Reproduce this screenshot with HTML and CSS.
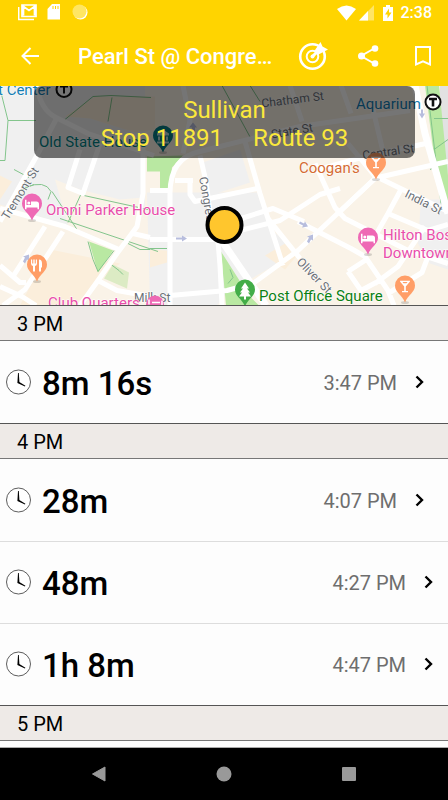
FILE: index.html
```html
<!DOCTYPE html>
<html lang="en">
<head>
  <meta charset="UTF-8" />
  <meta name="viewport" content="width=device-width, initial-scale=1.0"/>
  <title>Pearl St @ Congress St</title>
  <link rel="stylesheet" href="styles.css">
</head>
<body>
  <svg class="defs" width="0" height="0" aria-hidden="true">
    <symbol id="clock" viewBox="0 0 26 26">
      <circle cx="13.500" cy="13" r="12" fill="#fff" stroke="#333" stroke-width=".8"/>
      <path d="M13 4h.8l.6 9 6 3.800-.5.8-7.500-3.600z" fill="#000"/>
    </symbol>
    <symbol id="chevron" viewBox="0 0 10 14">
      <path d="M1.500 1.500L7 7 1.500 12.500" fill="none" stroke="#000" stroke-width="2.400"/>
    </symbol>
    <symbol id="pin" viewBox="0 0 20 28" overflow="visible">
      <ellipse cx="10" cy="27" rx="4" ry="1.500" fill="#000" opacity=".15"/>
      <path d="M10 0a10 10 0 0 1 10 10c0 7-7 9-10 17C7 19 0 17 0 10A10 10 0 0 1 10 0z"/>
    </symbol>
    <symbol id="bed" viewBox="0 0 14 10">
      <path d="M0 0h1.500v5.500H6V2h5.500A2.500 2.500 0 0 1 14 4.500V10h-1.500V8h-11v2H0z" fill="#fff"/>
      <circle cx="3.800" cy="3.600" r="1.500" fill="#fff"/>
    </symbol>
    <symbol id="glass" viewBox="0 0 10 12">
      <path d="M0 0h10v1L5.800 6v4.500H8V12H2v-1.500h2.200V6L0 1zm2.500 1.500l1 1.200h3l1-1.200z" fill="#fff" fill-rule="evenodd"/>
    </symbol>
  </svg>

  <header class="top">
    <div class="status">
      <svg width="70" height="17" viewBox="0 0 70 17" aria-hidden="true">
        <path d="M.7 3v12.500H16" fill="none" stroke="#fff" stroke-width="1.500"/>
        <path d="M4 1h14v11.500H4zM5.500 11.500V2.500l5.500 4 5.500-4v9" fill="none" stroke="#fff" stroke-width="1.700"/>
        <path d="M34 0h8v15.500H29.500V5z" fill="#fff"/>
        <path d="M35 2v3M37.500 2v3M40 2v3" stroke="#ffd400" stroke-width="1"/>
        <circle cx="62.500" cy="8.500" r="7" fill="#fff"/>
        <circle cx="61.500" cy="7.500" r="7" fill="#ffe662"/>
      </svg>
      <div class="status-right">
        <svg width="56" height="16" viewBox="0 0 56 16" aria-hidden="true">
          <path d="M0 4Q9.500-3 19 4L9.500 15.500z" fill="#fff"/>
          <path d="M37 0v15.500H22z" fill="#fff" opacity=".4"/>
          <path d="M31 6v9.500h-9z" fill="#fff"/>
          <path d="M49 0h4v2h3v14H46V2h3z" fill="#fff"/>
          <path d="M52 3.500L48 9.500h2.500v4l4-6H52z" fill="#ffd400"/>
        </svg>
        <span>2:38</span>
      </div>
    </div>
    <div class="appbar">
      <button class="icon-btn" aria-label="Back">
        <svg width="20" height="20" viewBox="0 0 20 20"><path d="M10.500 2L2.500 10l8 8M2.500 10H19" fill="none" stroke="#fff" stroke-width="2"/></svg>
      </button>
      <h1>Pearl St @ Congre…</h1>
      <div class="actions">
        <button class="icon-btn" aria-label="Track">
          <svg width="30" height="30" viewBox="0 0 30 30">
            <g fill="none" stroke="#fff">
              <circle cx="14.500" cy="15.500" r="12.300" stroke-width="2.600"/>
              <circle cx="14.500" cy="15.500" r="5.800" stroke-width="2"/>
              <path d="M14.500 15.500L24 6" stroke-width="3"/>
            </g>
            <path d="M16 10.500L22.500 1l2 4.500 5.500 3-10.500 5.500z" fill="#fff"/>
            <circle cx="14.500" cy="15.500" r="2" fill="#fff"/>
          </svg>
        </button>
        <button class="icon-btn" aria-label="Share">
          <svg width="22" height="24" viewBox="0 0 22 24">
            <path d="M18 4L4 12l14 8" fill="none" stroke="#fff" stroke-width="2"/>
            <g fill="#fff"><circle cx="18" cy="4.500" r="3.300"/><circle cx="4.500" cy="12" r="3.500"/><circle cx="18" cy="19.500" r="3.300"/></g>
          </svg>
        </button>
        <button class="icon-btn" aria-label="Bookmark">
          <svg width="18" height="22" viewBox="0 0 18 22"><path d="M2 2h14v17.500l-7-3.200-7 3.200z" fill="none" stroke="#fff" stroke-width="2"/></svg>
        </button>
      </div>
    </div>
  </header>

  <section class="map">
    <svg class="map-canvas" viewBox="0 86 448 220" preserveAspectRatio="xMidYMid slice">
      <rect x="-300" y="0" width="1100" height="500" fill="#faf3e8"/>
      <g fill="#f0f0f0">
        <path d="M0 86h145v120l-27 40-50-20L0 205z"/>
        <path d="M147 193h110l12 35 28 25-70 40-10 13h-67z"/>
        <path d="M421 200h27v70l-18-6-12-20z"/>
        <path d="M440 86h8v90l-8-40z" fill="#e2e2e2"/>
        <path d="M203 163l37-13 10 33-43 14z"/>
      </g>
      <g fill="#fbeedb">
        <path d="M65 117l30-20h60v33l-20 3-45-14z"/>
        <path d="M55 180l25 10 40 10 24-2-6 25-20 23-50-20z" fill="#faf3e8"/>
        <path d="M0 176l12 6-12 18z"/>
        <path d="M50 250l70 14-25 20-20 22H20z"/>
        <path d="M150 250l17 1v12l-17 5z"/>
        <path d="M265 256l20-12 12 12-12 14z"/>
      </g>
      <g fill="#b9e8a2">
        <path d="M147 157l36-1-11 12-2 22h-10v-18h-13z"/>
        <path d="M89 242l24 9-15 22z"/>
        <path d="M221 252l28 44 10 10h-33z"/>
        <path d="M425 86h14l9 90v28l-10-16z"/>
        <path d="M113 265l16 8-2 16-23-10z" fill="#dcebc4"/>
      </g>
      <g class="paths">
        <path d="M0 89l8 32-3 40H0M8 121h28M65 120l28-23 18-1 40 2M112 98l-4 24M14 170l15 8M52 192l25 38M68 223l16-35M25 188q20-8 26 4l-3 8M88 242l5 18 5 12 16-21M60 219l98 33M128 244l12 6h10M111 265l8 6 4 4M222 86l30 55M250 86l10 16M150 249h17M230 270l3 8-5 6M427 86l14 118M434 119h14M434 150l14-10M84 196l64 14"/>
        <path d="M8 209l8-16 18-8M430 170l18-8" />
      </g>
      <g class="roads">
        <path d="M0 222l38-68 18-34M37 86q3 24 19 32l32 16 66 22M80 150l-12 38 15 6 17-50M143 147v47l-6 33-20 27-19 27-18 25"/>
        <path d="M0 209l65 18 54 23M98 281l19 10 34 6M133 234l17 4M45 227l-32 50M63 232L25 290l-22 16M0 266l20 17h6M0 287l22 10 14 9"/>
        <path d="M373 110l10 42M183 86l7 35-7 33M170 306V194q0-36 30-42l100-25 110-16M200 156l6 26 8 60M245 142l15 52 23 72M175 181h18M150 191h21M257 189l-62 13-5-7v-14M341 86l10 28M290 86l12 36M348 144l28 34-78 73-45 33-26 7-57 5"/>
        <path d="M150 240h64M240 231l40-10 40-26 20-6M238 220l35-11 31 13M268 219l32 40M315 164l20 44 10 11 63 32 40 13M426 144l-61 13-50 14M448 162l-70 16 37 18 33 16M298 222l53 27 14 8 23 34 6 15M376 178l-35 33M401 190l-13 24-16 28M388 214l40 17 20-6M425 227l-27 40-23 17M348 272l17-11M348 272l13 19 15-8M428 257l-6 16-34 21"/>
        <path class="wide" d="M415 86l10 48 23 80"/>
        <path d="M218 242l2 24 2 40"/>
        <path class="wide" d="M223 243l43 63"/>
      </g>
      <g fill="#b7bddd">
        <path d="M176 238h6v-2l5 3-5 3v-2h-6zM300 222l4 2 1-2 3 5-6 1 1-2-4-2zM307 242l2-4-2-1 6-2v6l-2-1-2 4zM23 262l2-4-2-1 6-2v6l-2-1-2 4zM421 110v4h-2l3 5 3-5h-2v-4z"/>
        <path d="M192 128v4h3v-4h2l-4-5-4 5z"/>
      </g>

      <g class="street">
        <text transform="translate(8 221) rotate(-58)">Tremont St</text>
        <text transform="translate(199 178) rotate(80)">Congress</text>
        <text transform="translate(262 108) rotate(-7)">Chatham St</text>
        <text transform="translate(272 139) rotate(-10)">State St</text>
        <text transform="translate(363 160) rotate(-8)">Central St</text>
        <text transform="translate(404 197) rotate(27)">India St</text>
        <text transform="translate(296 263) rotate(46)">Oliver St</text>
        <text x="134" y="302">Milk St</text>
      </g>
      <g class="place">
        <text x="-2" y="95" fill="#147db3">t Center</text>
        <text x="356" y="109" fill="#147db3">Aquarium</text>
        <text x="39" y="147" fill="#008387">Old State House</text>
        <text x="299" y="173" fill="#d56b32">Coogan's</text>
        <text x="46" y="215" fill="#e94eaa">Omni Parker House</text>
        <text x="383" y="240" fill="#e94eaa">Hilton Boston</text>
        <text x="383" y="258" fill="#e94eaa">Downtown</text>
        <text x="48" y="308" fill="#e94eaa">Club Quarters</text>
        <text x="259" y="301" fill="#0b8013">Post Office Square</text>
      </g>
      <g fill="#fff" stroke="#111" stroke-width="2">
        <circle cx="64" cy="90" r="7.500"/><path d="M60 87h8M64 87v7"/>
        <circle cx="433" cy="102.500" r="7.500"/><path d="M429 99.500h8M433 99.500v7.500" stroke-width="2.600"/>
      </g>
      <use href="#pin" x="22" y="194" width="20" height="28" fill="#ee69b5"/>
      <use href="#bed" x="25" y="200" width="14" height="10"/>
      <use href="#pin" x="358" y="228" width="20" height="28" fill="#ee69b5"/>
      <use href="#bed" x="361" y="234" width="14" height="10"/>
      <use href="#pin" x="27" y="255" width="20" height="28" fill="#ff9e67"/>
      <path d="M31 260v4q0 2 2 2.500V272h2v-5.500q2-.5 2-2.500v-4h-1.200v4h-1.100v-4h-1.400v4h-1.100v-4zM39 260q3 0 3 4v4h-1v4h-2z" fill="#fff"/>
      <use href="#pin" x="366" y="153" width="20" height="28" fill="#ff9e67"/>
      <use href="#glass" x="371" y="157" width="10" height="12"/>
      <use href="#pin" x="395" y="276" width="20" height="28" fill="#ff9e67"/>
      <use href="#glass" x="400" y="281" width="10" height="12"/>
      <use href="#pin" x="153" y="126" width="20" height="28" fill="#087f88"/>
      <path d="M157 134l6-4 6 4v2h-12zM158 137h2v4h-2zM162 137h2v4h-2zM166 137h2v4h-2zM157 142h12v2h-12z" fill="#fff" opacity=".7"/>
      <use href="#pin" x="235" y="280" width="20" height="28" fill="#43ad48"/>
      <path d="M245 283l4 6h-2l3 4h-2l3 4h-5v3h-2v-3h-5l3-4h-2l3-4h-2z" fill="#fff"/>
      <circle cx="155" cy="305" r="9" fill="#ee69b5"/>
      <path d="M149 300v5M152 303h8M162 301v5" stroke="#fff" stroke-width="1.500"/>
      <circle cx="224.500" cy="225.500" r="17" fill="#ffc62d" stroke="#000" stroke-width="4"/>
    </svg>
    <div class="stop-info">
      <div>Sullivan</div>
      <div class="stop-line"><span>Stop 11891</span><span>Route 93</span></div>
    </div>
  </section>

  <main class="times">
    <h2>3 PM</h2>
    <a class="row inset" href="#">
      <svg class="clock"><use href="#clock"/></svg>
      <strong>8m 16s</strong>
      <span class="at">3:47 PM</span>
      <svg class="chevron"><use href="#chevron"/></svg>
    </a>
    <h2>4 PM</h2>
    <a class="row inset" href="#">
      <svg class="clock"><use href="#clock"/></svg>
      <strong>28m</strong>
      <span class="at">4:07 PM</span>
      <svg class="chevron"><use href="#chevron"/></svg>
    </a>
    <a class="row" href="#">
      <svg class="clock"><use href="#clock"/></svg>
      <strong>48m</strong>
      <span class="at">4:27 PM</span>
      <svg class="chevron"><use href="#chevron"/></svg>
    </a>
    <a class="row" href="#">
      <svg class="clock"><use href="#clock"/></svg>
      <strong>1h 8m</strong>
      <span class="at">4:47 PM</span>
      <svg class="chevron"><use href="#chevron"/></svg>
    </a>
    <h2>5 PM</h2>
  </main>

  <nav class="navbar">
    <button aria-label="System back"><svg width="16" height="16" viewBox="0 0 16 16"><path d="M14 1v14L1.500 8z" fill="#999" stroke="#999" stroke-linejoin="round"/></svg></button>
    <button aria-label="Home"><svg width="16" height="16" viewBox="0 0 16 16"><circle cx="8" cy="8" r="7.500" fill="#999"/></svg></button>
    <button aria-label="Recent apps"><svg width="16" height="16" viewBox="0 0 16 16"><rect x="1" y="1" width="14" height="14" rx="1" fill="#999"/></svg></button>
  </nav>
</body>
</html>
```

FILE: styles.css
```css
* {
  box-sizing: border-box;
}
body {
  margin: 0;
  height: 100vh;
  display: flex;
  flex-direction: column;
  font-family: Roboto, "Liberation Sans", sans-serif;
  background-color: #fdfdfd;
  color: #000;
}
button {
  background: none;
  border: none;
  padding: 0;
  cursor: pointer;
}
svg {
  display: block;
}
.defs {
  position: absolute;
}
.top {
  background-color: #ffd400;
  color: #fff;
}
.status {
  display: flex;
  justify-content: space-between;
  align-items: center;
  height: 25px;
  padding: 0 16px 0 18px;
}
.status-right {
  display: flex;
  align-items: center;
  gap: 8px;
  font-size: 16px;
  font-weight: 500;
}
.appbar {
  display: flex;
  align-items: center;
  height: 61px;
  padding: 0 10px;
}
.icon-btn {
  display: flex;
  align-items: center;
  justify-content: center;
  width: 40px;
  height: 40px;
}
h1 {
  flex: 1;
  margin: 0;
  padding: 2px 0 0 28px;
  font-size: 22px;
  font-weight: 500;
  white-space: nowrap;
}
.actions {
  display: flex;
  gap: 15px;
  margin-right: -5px;
}
.map {
  position: relative;
  height: 219px;
  flex-shrink: 0;
  box-shadow: inset 0 1px 2px rgba(0, 0, 0, 0.4);
}
.map-canvas {
  width: 100%;
  height: 100%;
}
.roads path {
  fill: none;
  stroke: #fff;
  stroke-width: 5;
  stroke-linejoin: round;
}
.roads .wide {
  stroke-width: 7;
}
.paths path {
  fill: none;
  stroke: #83c58c;
  stroke-width: 1;
}
.street {
  font-size: 12px;
  fill: #6b7076;
  stroke: #fff;
  stroke-width: 1px;
  paint-order: stroke;
}
.place {
  font-size: 15px;
  stroke: #fff;
  stroke-width: 1px;
  paint-order: stroke;
}
/* floats over the map */
.stop-info {
  position: absolute;
  top: 0;
  left: 34px;
  right: 33px;
  padding: 10px 0 6px;
  border-radius: 8px;
  background-color: rgba(0, 0, 0, 0.54);
  color: #fbe83c;
  font-size: 24px;
  line-height: 28px;
  text-align: center;
}
.stop-line {
  display: flex;
  justify-content: center;
  gap: 30px;
}
.times {
  flex: 1;
  min-height: 0;
  overflow: hidden;
}
h2 {
  margin: 0;
  height: 36px;
  padding-left: 17px;
  border-top: 1px solid #555;
  border-bottom: 1px solid #777;
  background-color: #eeeae7;
  font-size: 20px;
  font-weight: 400;
  line-height: 36px;
}
.row {
  display: flex;
  align-items: center;
  height: 82px;
  padding: 0 14px 0 5px;
  color: #000;
  text-decoration: none;
}
.row + .row {
  box-shadow: inset 0 1px #ddd;
}
.row.inset {
  padding-right: 23px;
}
.clock {
  width: 26px;
  height: 26px;
}
.row strong {
  flex: 1;
  padding: 3px 0 0 11px;
  font-size: 33px;
  font-weight: 500;
}
.at {
  padding-top: 2px;
  font-size: 20px;
  color: #6e6e6e;
}
.chevron {
  width: 10px;
  height: 14px;
  margin-left: 18px;
}
.navbar {
  display: flex;
  justify-content: center;
  gap: 77px;
  height: 53px;
  border-top: 1px solid #aaa;
  background-color: #000;
}
.navbar button {
  display: flex;
  align-items: center;
  justify-content: center;
  width: 48px;
}
```
